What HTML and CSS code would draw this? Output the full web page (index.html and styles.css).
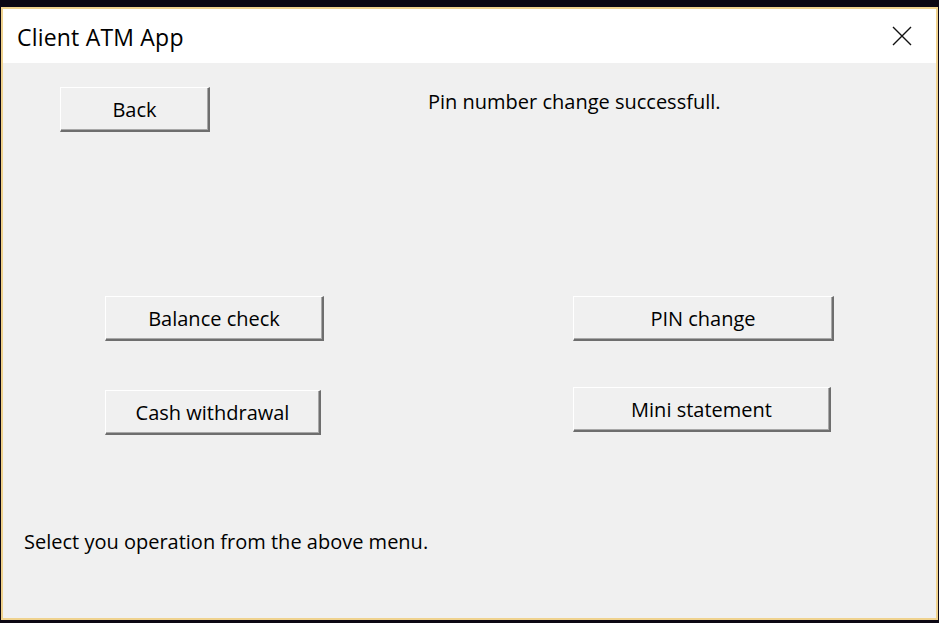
FILE: index.html
```html
<!DOCTYPE html>
<html>
<head>
<meta charset="utf-8">
<link rel="stylesheet" href="styles.css">
</head>
<body>
<div class="window">
  <div class="titlebar">
    <span class="title">Client ATM App</span>
    <svg class="close" width="20" height="20" viewBox="0 0 20 20"><path d="M1 1 L19 19 M19 1 L1 19" stroke="#111" stroke-width="1.4" fill="none"/></svg>
  </div>
  <div class="client">
    <div class="toprow">
      <button class="btn back">Back</button>
      <p class="msg">Pin number change successfull.</p>
    </div>
    <div class="menu">
      <div class="col left">
        <button class="btn balance">Balance check</button>
        <button class="btn cash">Cash withdrawal</button>
      </div>
      <div class="col right">
        <button class="btn pin">PIN change</button>
        <button class="btn mini">Mini statement</button>
      </div>
    </div>
    <p class="status">Select you operation from the above menu.</p>
  </div>
</div>
</body>
</html>
```

FILE: styles.css
```css
html, body {
  margin: 0;
  padding: 0;
  width: 939px;
  height: 623px;
  overflow: hidden;
  background: #0c0713;
  font-family: "Open Sans", "Noto Sans", sans-serif;
}
body {
  padding: 7px 1px 3px 1px;
  box-sizing: border-box;
}
.window {
  height: 613px;
  border: 2px solid #efd28e;
  background: #f0f0f0;
  display: flex;
  flex-direction: column;
  box-sizing: border-box;
}
.titlebar {
  height: 54px;
  background: #ffffff;
  display: flex;
  align-items: center;
  justify-content: space-between;
  padding: 0 24px 0 14px;
  flex: none;
}
.title {
  font-size: 23px;
  color: #000;
  margin-top: 2px;
  letter-spacing: 0.2px;
}
.close {
  display: block;
}
.client {
  flex: 1;
  display: flex;
  flex-direction: column;
}
.btn {
  font-family: inherit;
  font-size: 20px;
  color: #000;
  background: #f0f0f0;
  border-style: solid;
  border-width: 1px 2px 2px 1px;
  border-color: #ffffff #6e6e6e #6e6e6e #ffffff;
  box-shadow: inset -1px -1px 0 #a8a8a8;
  height: 45px;
  padding: 0;
  margin: 0;
  box-sizing: border-box;
  display: flex;
  align-items: center;
  justify-content: center;
}
.toprow {
  display: flex;
  align-items: flex-start;
  padding-top: 24px;
}
.back {
  width: 150px;
  margin-left: 57px;
}
.msg {
  margin: 1px 0 0 218px;
  font-size: 20px;
}
.menu {
  display: flex;
  margin-top: 164px;
}
.col {
  display: flex;
  flex-direction: column;
}
.left { margin-left: 102px; gap: 49px; }
.right { margin-left: 249px; gap: 46px; }
.balance { width: 219px; }
.cash { width: 216px; }
.pin { width: 261px; }
.mini { width: 258px; }
.status {
  margin: 93px 0 0 21px;
  font-size: 20px;
}
```
